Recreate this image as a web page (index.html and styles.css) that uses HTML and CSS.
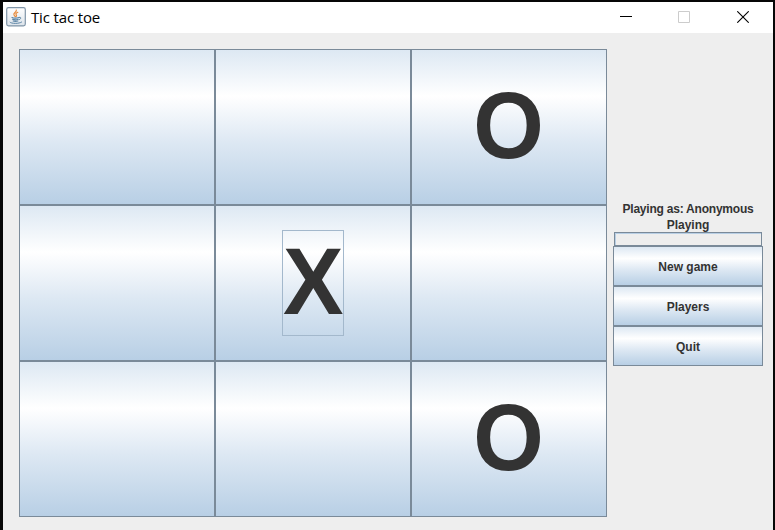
FILE: index.html
```html
<!DOCTYPE html>
<html lang="en">
<head>
<meta charset="utf-8">
<title>Tic tac toe</title>
<link rel="stylesheet" href="styles.css">
</head>
<body>
<div class="window">
  <header class="titlebar">
    <svg class="app-icon" width="20" height="20" viewBox="0 0 20 20">
      <defs><linearGradient id="tile" x2="0" y2="1"><stop stop-color="#fff"/><stop offset="1" stop-color="#dce3ea"/></linearGradient></defs>
      <rect x=".7" y=".7" width="18.6" height="18.2" rx="1.8" fill="url(#tile)" stroke="#8095a8" stroke-width="1.2"/>
      <g fill="none" stroke-linecap="round">
        <path d="M10.3 3c.7 2-3.2 3-2.4 4.7.3.8 1 1.2 1.4 1.9M11.8 5.3c-2 1-2.3 1.7-1.5 2.6.5.6.3 1.1-.2 1.6" stroke="#e88b3c" stroke-width="1.2"/>
        <path d="M6 10.5c1.5.6 5 .6 7 0M6.6 12.3c1.5.6 4 .6 5.6 0M7.2 14c1.3.5 3.2.5 4.6 0" stroke="#5b84a5" stroke-width="1.2"/>
        <path d="M13.3 10.3c2-.6 2.2 1.6-.1 2.3M4 15.3c1 1.5 9.3 1.6 11.6-.2" stroke="#5b84a5"/>
      </g>
    </svg>
    <h1 class="title">Tic tac toe</h1>
    <div class="controls">
      <svg width="12" height="12" viewBox="0 0 12 12"><path d="M0 5.5h12" stroke="#000"/></svg>
      <svg width="12" height="12" viewBox="0 0 12 12"><path d="M.5.5h11v11H.5z" fill="none" stroke="#ccc"/></svg>
      <svg width="12" height="12" viewBox="0 0 12 12"><path d="M.3.3l11.4 11.4M11.7.3L.3 11.7" stroke="#000" stroke-width="1.1"/></svg>
    </div>
  </header>
  <main class="content">
    <div class="board">
      <button class="cell"></button>
      <button class="cell"></button>
      <button class="cell"><span class="mark"><span class="glyph">O</span></span></button>
      <button class="cell"></button>
      <button class="cell"><span class="mark focused"><span class="glyph">X</span></span></button>
      <button class="cell"></button>
      <button class="cell"></button>
      <button class="cell"></button>
      <button class="cell"><span class="mark"><span class="glyph">O</span></span></button>
    </div>
    <aside class="side">
      <div class="label">Playing as: Anonymous</div>
      <div class="label">Playing</div>
      <div class="progress"></div>
      <button class="action">New game</button>
      <button class="action">Players</button>
      <button class="action">Quit</button>
    </aside>
  </main>
</div>
</body>
</html>
```
FILE: styles.css
```css
* { box-sizing: border-box; }

body {
  margin: 0;
  overflow: hidden;
  font-family: "Liberation Sans", Arial, sans-serif;
  color: #333;
}

.window {
  width: 775px;
  height: 530px;
  border: solid #070707;
  border-width: 2px 2px 0 3px;
  background: #eee;
}

.titlebar {
  display: flex;
  align-items: center;
  height: 31px;
  padding: 0 24px 0 3px;
  background: #fff;
}

.app-icon { margin-top: -2px; }

.title {
  margin: -2px 0 0 5px;
  font: 400 15px/20px "Open Sans", sans-serif;
  letter-spacing: -0.15px;
  color: #000;
}

.controls {
  display: flex;
  gap: 47px;
  margin: -1px 0 0 auto;
}

.controls svg:nth-child(2) { margin-right: 0; }
.controls svg:first-child { margin-right: -1px; }

.content {
  display: flex;
  align-items: flex-start;
  padding: 16px 10px 0 16px;
}

.board {
  display: grid;
  grid-template-columns: repeat(3, 196px);
  grid-template-rows: repeat(3, 156px);
}

.cell,
.action {
  display: flex;
  align-items: center;
  justify-content: center;
  padding: 0;
  border: 1px solid #7a8a99;
  background: linear-gradient(#dde8f3, #fff 30%, #dde8f3 60%, #b8cfe5);
  font-family: inherit;
  font-weight: bold;
  color: #333;
}

.mark {
  width: 62px;
  height: 106px;
  display: flex;
  justify-content: center;
  border: 1px solid transparent;
  font-size: 94px;
  line-height: 102px;
}

.glyph { transform: scaleX(0.965); }

.focused { border-color: #a3b8cc; }

.side {
  width: 150px;
  margin: 152px 0 0 6px;
}

.label {
  height: 16px;
  font-size: 12px;
  font-weight: bold;
  line-height: 16px;
  letter-spacing: -0.22px;
  text-align: center;
  white-space: nowrap;
}

.label + .label { letter-spacing: 0; }

.progress {
  height: 14px;
  margin: -1px 1px 0;
  border: 1px solid #7a8a99;
  box-shadow: inset 1px 1px #b8cfe5;
}

.action {
  width: 150px;
  height: 40px;
  padding-top: 2px;
  font-size: 12px;
}
```
